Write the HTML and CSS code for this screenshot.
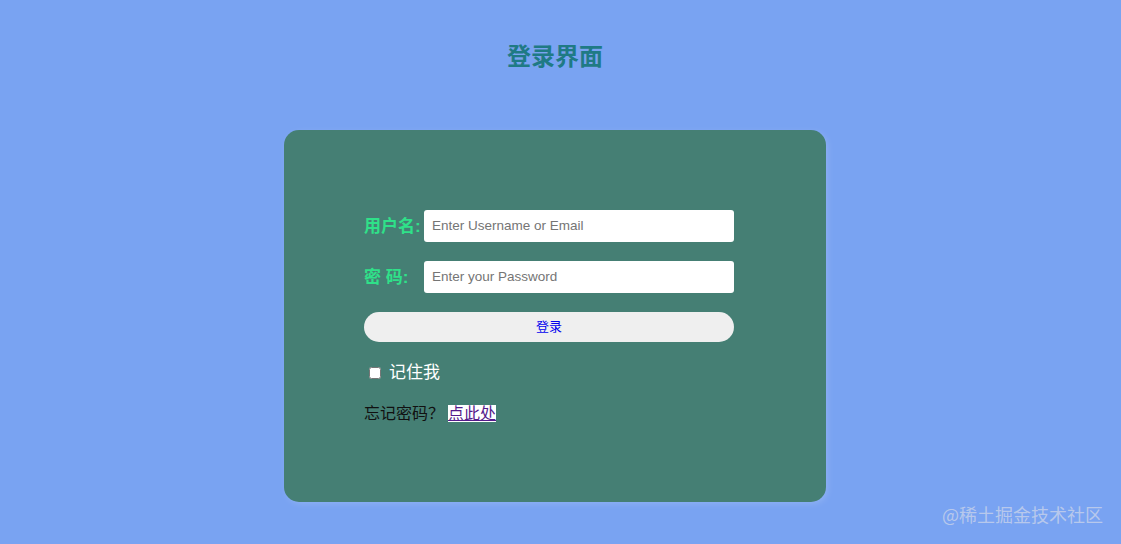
FILE: index.html
```html
<!DOCTYPE html>
<html lang="zh-CN">
<head>
  <meta charset="UTF-8" />
  <title>登录界面</title>
  <link rel="stylesheet" href="styles.css">
</head>
<body>
  <h2 class="titulo">登录界面</h2>
  <!-- 登录框 -->
  <div class="caixa">
    <form class="form">
      <div class="linha">
        <label for="user">用户名:</label>
        <input type="text" id="user" placeholder="Enter Username or Email" />
      </div>
      <div class="linha">
        <label for="pass">密 码:</label>
        <input type="password" id="pass" placeholder="Enter your Password" />
      </div>
      <button type="button" class="btn">登录</button>
      <div class="lembrar">
        <input type="checkbox" id="lembrar" />
        <span>记住我</span>
      </div>
      <p class="esqueci">忘记密码？<a href="#">点此处</a></p>
    </form>
  </div>
  <div class="marca">@稀土掘金技术社区</div>
</body>
</html>
```

FILE: styles.css
```css
* {
  margin: 0;
  padding: 0;
  box-sizing: border-box;
}
body {
  font-family: "Liberation Sans", "Noto Sans CJK SC", sans-serif;
  background: #79a3f2;
  height: 544px;
  padding-top: 41px;
  position: relative;
}
.titulo {
  width: 542px;
  margin-left: 284px;
  text-align: center;
  font-size: 24px;
  line-height: 32px;
  color: #1f7a85;
  font-weight: bold;
}
.caixa {
  width: 542px;
  height: 372px;
  margin: 57px 0 0 284px;
  background: #457f74;
  border-radius: 15px;
  padding: 80px 80px 0;
  box-shadow: 2px 2px 6px rgb(255 255 255 / 0.15);
}
.form {
  width: 370px;
}
.linha {
  display: flex;
  align-items: center;
  margin-bottom: 19px;
}
.linha label {
  width: 60px;
  font-size: 17px;
  font-weight: bold;
  color: #2fe189;
  white-space: pre;
  padding-bottom: 3px;
}
.linha input {
  width: 310px;
  height: 32px;
  border: none;
  border-radius: 3px;
  padding: 0 8px 2px;
  font-family: "Liberation Sans", sans-serif;
  font-size: 13.5px;
  color: #333;
  background: #fff;
}
.linha input::placeholder {
  color: #757575;
}
.btn {
  width: 370px;
  height: 30px;
  border: none;
  border-radius: 15px;
  background: #efefef;
  color: #0000ee;
  font-size: 13px;
  line-height: 28px;
  font-family: "Liberation Sans", "Noto Sans CJK SC", sans-serif;
}
.lembrar {
  display: flex;
  align-items: center;
  margin-top: 18px;
  padding-left: 5px;
  color: #fff;
  font-size: 17px;
  line-height: 26px;
}
.lembrar input {
  width: 12px;
  height: 12px;
  margin-right: 8px;
  accent-color: #fff;
}
.esqueci {
  margin-top: 17px;
  font-size: 16px;
  line-height: 22px;
  color: #111;
}
.esqueci a {
  color: #551a8b;
  background: #fff;
  margin-left: 4px;
}
.marca {
  position: absolute;
  right: 18px;
  bottom: 17px;
  font-size: 18px;
  color: #b7c8ec;
  font-family: "Noto Sans CJK SC", sans-serif;
}
```
